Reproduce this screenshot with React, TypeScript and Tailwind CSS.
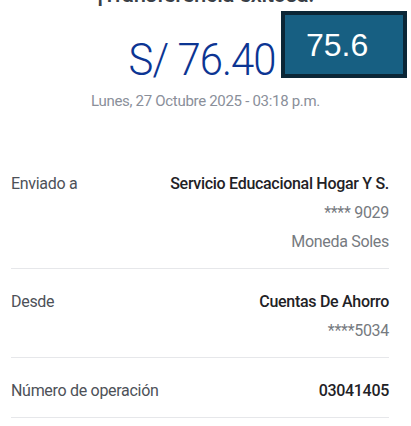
const font = { fontFamily: 'Roboto, "Noto Sans", sans-serif' }

type Row = { label: string; main: string; extra: string[] }

const rows: Row[] = [
  { label: 'Enviado a', main: 'Servicio Educacional Hogar Y S.', extra: ['**** 9029', 'Moneda Soles'] },
  { label: 'Desde', main: 'Cuentas De Ahorro', extra: ['****5034'] },
  { label: 'Número de operación', main: '03041405', extra: [] },
]

export default function App() {
  return (
    <div className="relative w-[411px] h-[426px] overflow-hidden bg-white" style={font}>
      {/* Header */}
      <div className="flex flex-col items-center">
        <h1 className="-mt-[19px] text-[22px] leading-[28px] font-medium text-[#3a3f47] tracking-[-0.3px]">
          ¡Transferencia exitosa!
        </h1>
        <p className="mt-[25px] text-[45px] leading-[52px] font-light text-[#0c3593] tracking-[-1px] scale-x-[0.93] translate-x-[-3px]">
          S/ 76.40
        </p>
        <p className="mt-[5px] text-[15px] leading-[20px] text-[#8a8f9a] tracking-[-0.3px]">
          Lunes, 27 Octubre 2025 - 03:18 p.m.
        </p>
      </div>

      {/* Details */}
      <div className="mt-[59px] px-[11px] pr-[22px]">
        {rows.map((row) => (
          <div key={row.label} className="flex justify-between border-b border-[#e6e7ea] pt-[19px] pb-[12px] first:pt-0">
            <span className="text-[16px] leading-[28px] text-[#4d5158] tracking-[-0.3px]">{row.label}</span>
            <div className="flex flex-col items-end gap-[1px]">
              <span className="text-[16px] leading-[28px] font-medium text-[#1f2226] tracking-[-0.3px]">{row.main}</span>
              {row.extra.map((e) => (
                <span key={e} className="text-[16px] leading-[28px] text-[#767a80] tracking-[-0.3px]">{e}</span>
              ))}
            </div>
          </div>
        ))}
      </div>

      {/* Overlay badge */}
      <div className="absolute left-[281px] top-[11px] w-[126px] h-[67px] bg-[#175f82] border-[4px] border-[#0b2636] flex items-center pl-[21px]">
        <span className="text-[32px] leading-none text-white" style={{ fontFamily: '"Liberation Sans", Arial, sans-serif' }}>
          75.6
        </span>
      </div>
    </div>
  )
}
